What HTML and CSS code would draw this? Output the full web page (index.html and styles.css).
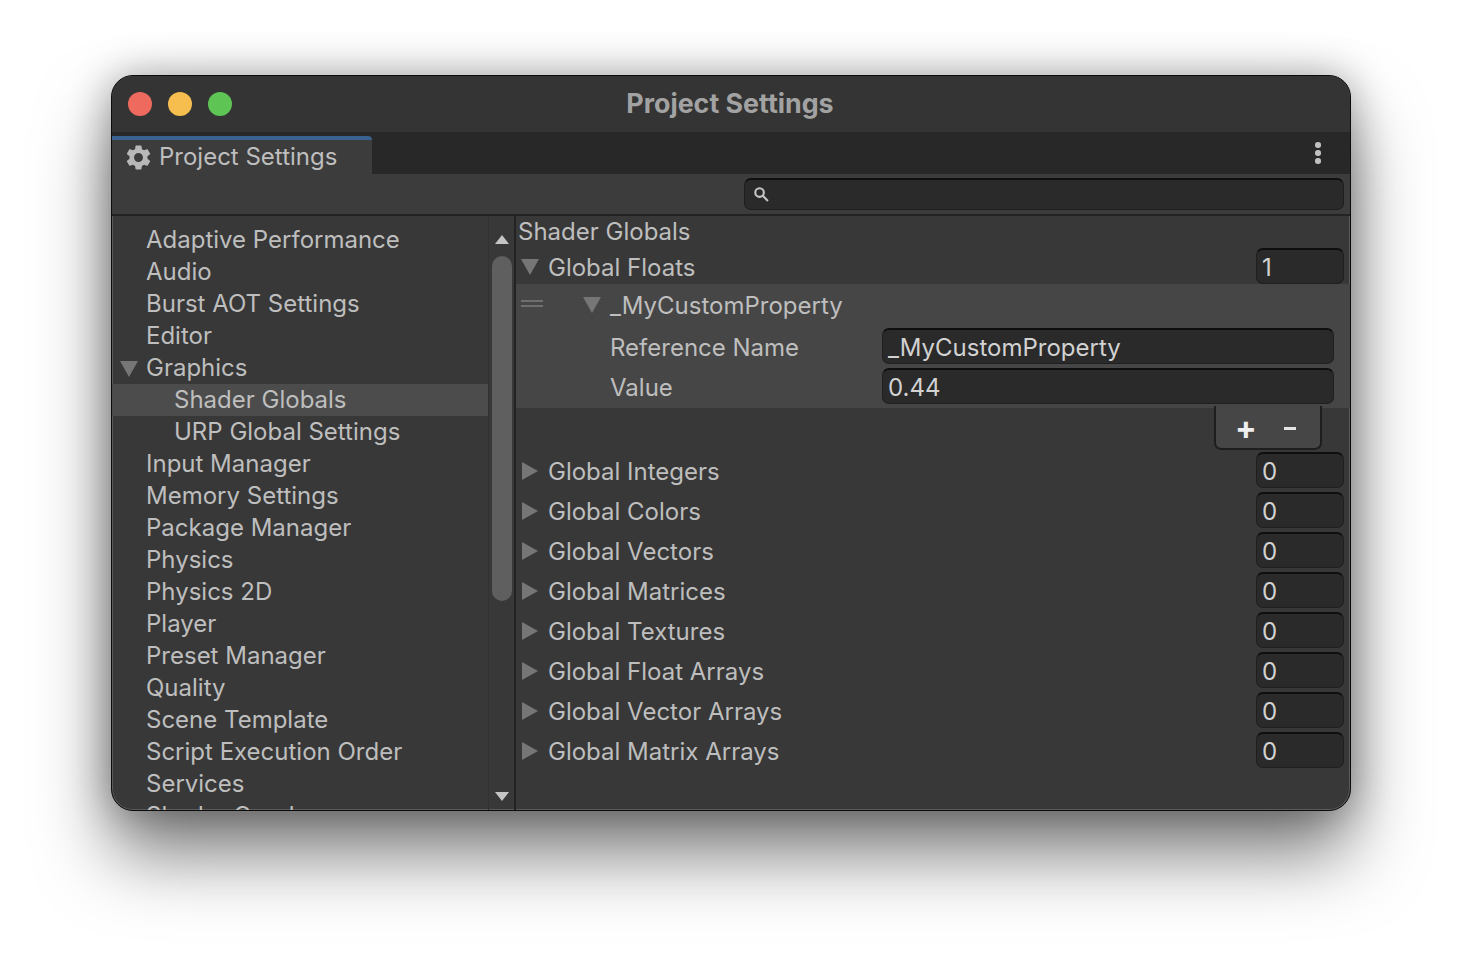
FILE: index.html

```html
<!DOCTYPE html>
<html lang="en">
<head>
  <meta charset="UTF-8" />
  <meta name="viewport" content="width=device-width, initial-scale=1.0"/>
  <title>Project Settings</title>
  <link rel="stylesheet" href="styles.css">
</head>
<body>
  <div class="window">
    <header class="titlebar">
      <div class="lights">
        <span class="light red"></span>
        <span class="light yellow"></span>
        <span class="light green"></span>
      </div>
      <div class="window-title">Project Settings</div>
    </header>

    <div class="tabbar">
      <div class="tab">
        <svg class="gear" viewBox="2 2 20 20"><path fill-rule="evenodd" d="M19.14 12.94c.04-.3.06-.61.06-.94 0-.32-.02-.64-.07-.94l2.03-1.58a.49.49 0 0 0 .12-.61l-1.92-3.32a.488.488 0 0 0-.59-.22l-2.39.96c-.5-.38-1.03-.7-1.62-.94l-.36-2.54a.484.484 0 0 0-.48-.41h-3.84c-.24 0-.43.17-.47.41l-.36 2.54c-.59.24-1.13.57-1.62.94l-2.39-.96c-.22-.08-.47 0-.59.22L2.74 8.87c-.12.21-.08.47.12.61l2.03 1.58c-.05.3-.09.63-.09.94s.02.64.07.94l-2.03 1.58a.49.49 0 0 0-.12.61l1.92 3.32c.12.22.37.29.59.22l2.39-.96c.5.38 1.03.7 1.62.94l.36 2.54c.05.24.24.41.48.41h3.84c.24 0 .44-.17.47-.41l.36-2.54c.59-.24 1.13-.56 1.62-.94l2.39.96c.22.08.47 0 .59-.22l1.92-3.32c.12-.22.07-.47-.12-.61l-2.01-1.58zM12 15.6c-1.98 0-3.6-1.62-3.6-3.6s1.62-3.6 3.6-3.6 3.6 1.62 3.6 3.6-1.62 3.6-3.6 3.6z"/></svg>
        <span>Project Settings</span>
      </div>
      <div class="kebab"><i></i><i></i><i></i></div>
    </div>

    <div class="toolbar">
      <div class="search">
        <svg class="search-icon" viewBox="0 0 14 14"><circle cx="5.2" cy="5.2" r="4"/><path d="M8.2 8.2 13 13"/></svg>
      </div>
    </div>

    <div class="content">
      <nav class="sidebar">
        <ul class="tree">
          <li>Adaptive Performance</li>
          <li>Audio</li>
          <li>Burst AOT Settings</li>
          <li>Editor</li>
          <li class="has-arrow"><span class="tri down"></span>Graphics</li>
          <li class="child selected">Shader Globals</li>
          <li class="child">URP Global Settings</li>
          <li>Input Manager</li>
          <li>Memory Settings</li>
          <li>Package Manager</li>
          <li>Physics</li>
          <li>Physics 2D</li>
          <li>Player</li>
          <li>Preset Manager</li>
          <li>Quality</li>
          <li>Scene Template</li>
          <li>Script Execution Order</li>
          <li>Services</li>
          <li>Shader Graph</li>
        </ul>
        <div class="scrollbar">
          <span class="scroll-arrow up"></span>
          <div class="thumb"></div>
          <span class="scroll-arrow dn"></span>
        </div>
      </nav>

      <main class="panel">
        <div class="panel-title">Shader Globals</div>

        <div class="foldout"><span class="tri down"></span><span class="foldout-label">Global Floats</span><div class="field count">1</div></div>

        <div class="element">
          <div class="element-head">
            <span class="handle"></span>
            <span class="tri down"></span>
            <span>_MyCustomProperty</span>
          </div>
          <div class="prop"><label>Reference Name</label><div class="field">_MyCustomProperty</div></div>
          <div class="prop"><label>Value</label><div class="field">0.44</div></div>
        </div>

        <div class="list-footer">
          <span class="plus">+</span>
          <span class="minus"></span>
        </div>

        <div class="foldouts">
          <div class="foldout"><span class="tri right"></span><span class="foldout-label">Global Integers</span><div class="field count">0</div></div>
          <div class="foldout"><span class="tri right"></span><span class="foldout-label">Global Colors</span><div class="field count">0</div></div>
          <div class="foldout"><span class="tri right"></span><span class="foldout-label">Global Vectors</span><div class="field count">0</div></div>
          <div class="foldout"><span class="tri right"></span><span class="foldout-label">Global Matrices</span><div class="field count">0</div></div>
          <div class="foldout"><span class="tri right"></span><span class="foldout-label">Global Textures</span><div class="field count">0</div></div>
          <div class="foldout"><span class="tri right"></span><span class="foldout-label">Global Float Arrays</span><div class="field count">0</div></div>
          <div class="foldout"><span class="tri right"></span><span class="foldout-label">Global Vector Arrays</span><div class="field count">0</div></div>
          <div class="foldout"><span class="tri right"></span><span class="foldout-label">Global Matrix Arrays</span><div class="field count">0</div></div>
        </div>
      </main>
    </div>
  </div>
</body>
</html>
```

FILE: styles.css

```css
* { box-sizing: border-box; }
html, body { height: 100%; }
body { margin: 0; background: #fff; overflow: hidden; padding: 75px 0 0 111px; font-family: Inter, "Liberation Sans", sans-serif; font-size: 24px; color: #bebebe; }

.window { width: 1240px; height: 736px; display: flex; flex-direction: column; background: #383838; border: 1px solid #0c0c0c; border-radius: 22px; overflow: hidden; box-shadow: 0 44px 72px rgba(0,0,0,0.5), 0 0 40px rgba(0,0,0,0.32), inset 0 0 0 1px #5a5a5a; }

.titlebar { flex: 0 0 56px; position: relative; display: flex; align-items: center; background: #343434; }
.lights { display: flex; gap: 16px; padding: 0 0 0 16px; }
.light { width: 24px; height: 24px; border-radius: 50%; }
.red { background: #ee6a5f; }
.yellow { background: #f6be4f; }
.green { background: #5ec454; }
.window-title { position: absolute; left: 0; right: 0; top: 11px; text-align: center; font-size: 26.8px; line-height: 32px; font-weight: 700; color: #a2a2a2; padding-right: 2px; }

.tabbar { flex: 0 0 42px; display: flex; justify-content: space-between; background: #282828; }
.tab { width: 260px; margin-top: 4px; display: flex; align-items: center; gap: 8px; padding: 0 0 2px 14px; background: #3c3c3c; border-top: 4px solid #3a6290; border-top-right-radius: 4px; }
.gear { width: 25px; height: 25px; fill: #b8b8b8; margin-top: 2px; }
.kebab { display: flex; flex-direction: column; gap: 2.5px; padding: 10px 29.5px 0 0; }
.kebab i { width: 5.5px; height: 5.5px; border-radius: 50%; background: #c0c0c0; }

.toolbar { flex: 0 0 42px; display: flex; justify-content: flex-end; padding: 4px 6px 0 0; background: #3c3c3c; border-bottom: 2px solid #232323; }
.search { width: 600px; height: 32px; display: flex; align-items: center; padding-left: 9px; background: #2a2a2a; border: 1px solid #1e1e1e; border-top: 2px solid #0f0f0f; border-radius: 7px; }
.search-icon { width: 15px; height: 15px; fill: none; stroke: #c4c4c4; stroke-width: 2; }

.content { flex: 1; min-height: 0; display: flex; }
.sidebar { flex: 0 0 404px; display: flex; overflow: hidden; border-right: 2px solid #232323; }
.tree { flex: 1; list-style: none; margin: 0; padding: 8px 0 0; height: 640px; }
.tree li { position: relative; height: 32px; line-height: 32px; padding-left: 34px; white-space: nowrap; }
.tree .child { padding-left: 62px; }
.tree .selected { background: #4c4c4c; }
.tree .tri { position: absolute; left: 8px; top: 9px; }

.scrollbar { flex: 0 0 26px; position: relative; border-left: 1px solid #323232; }
.thumb { position: absolute; left: 3px; top: 40px; width: 20px; height: 345px; border-radius: 10px; background: #5f5f5f; }
.scroll-arrow { position: absolute; left: 6px; width: 0; height: 0; border-left: 7px solid transparent; border-right: 7px solid transparent; }
.up { top: 19px; border-bottom: 9px solid #c4c4c4; }
.dn { bottom: 9px; border-top: 9px solid #c4c4c4; }

.tri { display: block; width: 0; height: 0; flex: none; }
.tri.down { border-left: 9px solid transparent; border-right: 9px solid transparent; border-top: 16px solid #767676; }
.tri.right { border-top: 9px solid transparent; border-bottom: 9px solid transparent; border-left: 16px solid #767676; }

.panel { flex: 1; min-width: 0; }
.panel-title { height: 30px; line-height: 32px; padding-left: 2px; margin-bottom: 2px; }

.field { height: 36px; line-height: 36px; padding-left: 5px; background: #2a2a2a; border: 1px solid #1f1f1f; border-top: 2px solid #0e0e0e; border-radius: 7px; color: #d2d2d2; }
.field.count { width: 88px; flex: none; margin-left: auto; }

.foldout { height: 36px; display: flex; align-items: center; padding: 0 6px 0 5px; }
.foldout .tri { position: relative; top: 1px; }
.foldout .tri.down { margin: 0 9px 0 0; }
.foldout .tri.right { margin: 0 10px 0 1px; }
.foldout-label { padding-top: 2px; }
.foldouts { display: flex; flex-direction: column; gap: 4px; padding-top: 2px; }

.element { height: 124px; background: #464646; padding: 0 16px 0 0; }
.element-head { height: 42px; display: flex; align-items: center; }
.handle { width: 22px; height: 7px; margin: 0 40px 4px 5px; border-top: 2px solid #6e6e6e; border-bottom: 2px solid #6e6e6e; }
.element-head .tri { margin-right: 9px; }
.prop { display: flex; align-items: center; height: 36px; margin-top: 4px; padding-left: 94px; }
.element-head + .prop { margin-top: 2px; }
.prop label { flex: 0 0 272px; padding-top: 2px; }
.prop .field { flex: 1; }

.list-footer { width: 108px; height: 44px; margin: -2px 28px 0 auto; display: flex; align-items: center; gap: 29px; padding: 2px 0 0 19px; position: relative; background: #464646; border: 2px solid #1e1e1e; border-top: 0; border-radius: 0 0 7px 7px; }
.plus { width: 20px; text-align: center; font-size: 32px; font-weight: 700; line-height: 32px; color: #eee; }
.minus { width: 12px; height: 3px; background: #e4e4e4; }
```
